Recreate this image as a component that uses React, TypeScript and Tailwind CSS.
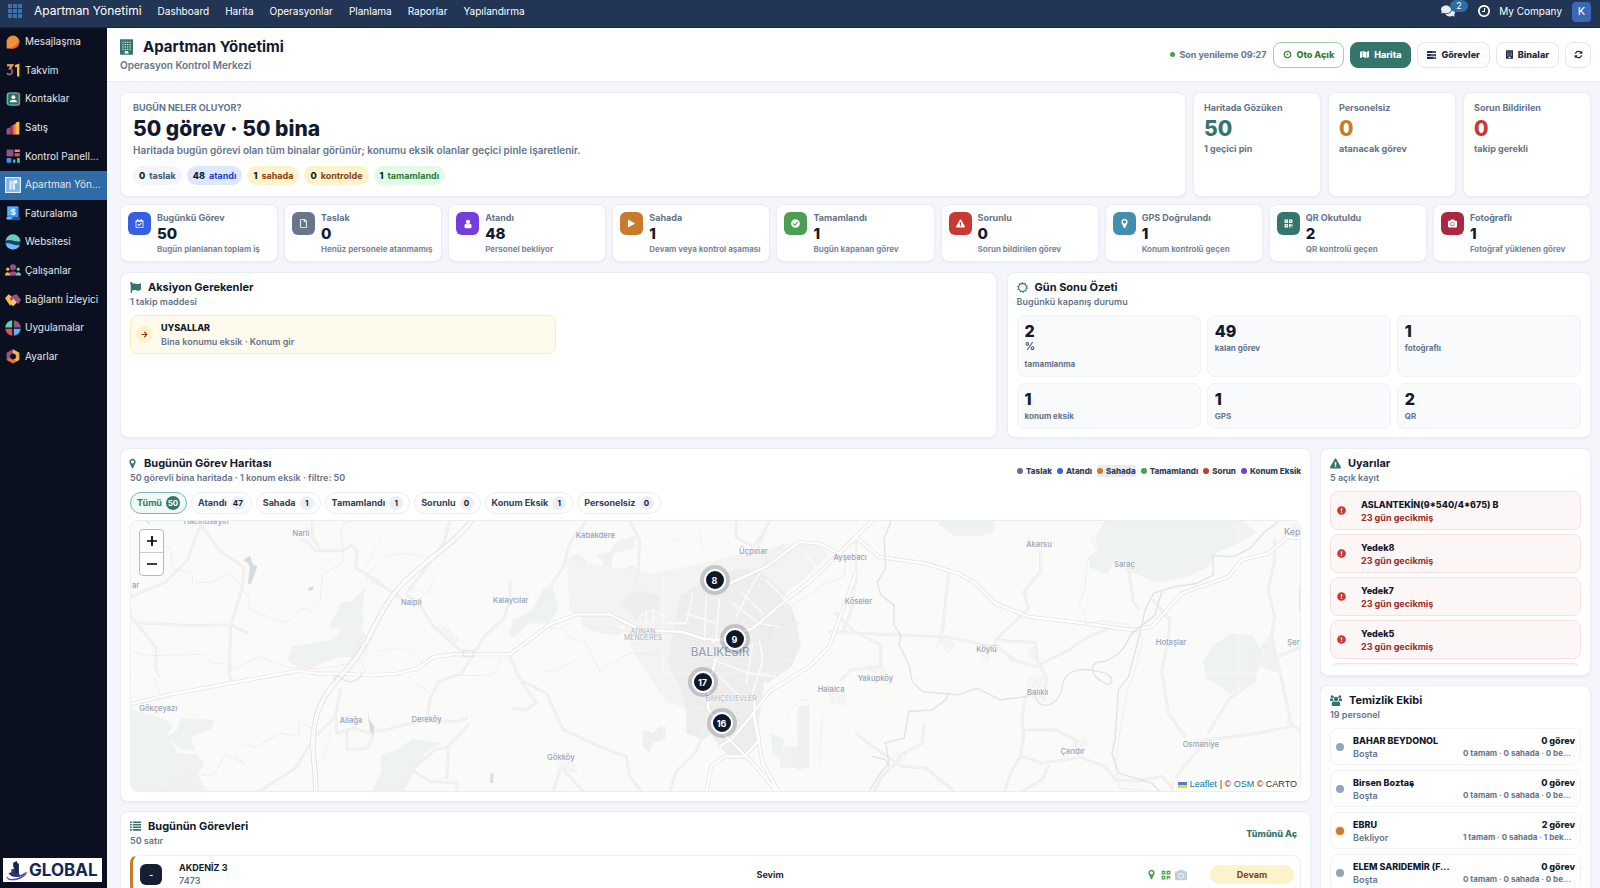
import React from "react";
import {
  FaArrowRight,
  FaCamera,
  FaCheckCircle,
  FaComments,
  FaExclamationCircle,
  FaExclamationTriangle,
  FaFlag,
  FaMap,
  FaQrcode,
  FaRegCalendarCheck,
  FaRegFile,
} from "react-icons/fa";

type IconProps = { className?: string };

function Glyph({ d, className }: { d: string; className?: string }) {
  return (
    <svg viewBox="0 0 1792 1792" fill="currentColor" className={className} aria-hidden="true">
      <path d={d} />
    </svg>
  );
}

const UserIcon = (p: IconProps) => (
  <Glyph
    {...p}
    d="M1536 1399q0 109-62.5 187t-150.5 78h-854q-88 0-150.5-78t-62.5-187q0-85 8.5-160.5t31.5-152 58.5-131 94-89 134.5-34.5q131 128 313 128t313-128q76 0 134.5 34.5t94 89 58.5 131 31.5 152 8.5 160.5zm-256-887q0 159-112.5 271.5t-271.5 112.5-271.5-112.5-112.5-271.5 112.5-271.5 271.5-112.5 271.5 112.5 112.5 271.5z"
  />
);
const RefreshIcon = (p: IconProps) => (
  <Glyph
    {...p}
    d="M1639 1056q0 5-1 7-64 268-268 434.5t-478 166.5q-146 0-282.5-55t-243.5-157l-129 129q-19 19-45 19t-45-19-19-45v-448q0-26 19-45t45-19h448q26 0 45 19t19 45-19 45l-137 137q71 66 161 102t187 36q134 0 250-65t186-179q11-17 53-117 8-23 30-23h192q13 0 22.5 9.5t9.5 22.5zm25-800v448q0 26-19 45t-45 19h-448q-26 0-45-19t-19-45 19-45l138-138q-148-137-349-137-134 0-250 65t-186 179q-11 17-53 117-8 23-30 23h-199q-13 0-22.5-9.5t-9.5-22.5v-7q65-268 270-434.5t480-166.5q146 0 284 55.5t245 156.5l130-129q19-19 45-19t45 19 19 45z"
  />
);
const PinIcon = (p: IconProps) => (
  <Glyph
    {...p}
    d="M1152 640q0-106-75-181t-181-75-181 75-75 181 75 181 181 75 181-75 75-181zm256 0q0 109-33 179l-364 774q-16 33-47.5 52t-67.5 19-67.5-19-46.5-52l-365-774q-33-70-33-179 0-212 150-362t362-150 362 150 150 362z"
  />
);
const PlayIcon = (p: IconProps) => (
  <Glyph {...p} d="M1576 927l-1328 738q-23 13-39.5 3t-16.5-36v-1472q0-26 16.5-36t39.5 3l1328 738q23 13 23 31t-23 31z" />
);
const ClockIcon = (p: IconProps) => (
  <Glyph
    {...p}
    d="M1024 544v448q0 14-9 23t-23 9h-320q-14 0-23-9t-9-23v-64q0-14 9-23t23-9h224v-352q0-14 9-23t23-9h64q14 0 23 9t9 23zm416 352q0-148-73-273t-198-198-273-73-273 73-198 198-73 273 73 273 198 198 273 73 273-73 198-198 73-273zm224 0q0 209-103 385.5t-279.5 279.5-385.5 103-385.5-103-279.5-279.5-103-385.5 103-385.5 279.5-279.5 385.5-103 385.5 103 279.5 279.5 103 385.5z"
  />
);

function BuildingIcon({ className }: IconProps) {
  const rows = [4, 8, 12, 16];
  const cols = [4, 8, 12, 16];
  return (
    <svg viewBox="0 0 22 26" className={className} aria-hidden="true">
      <rect width="22" height="26" rx="1" fill="currentColor" />
      {rows.map((y) =>
        cols.map((x) => <rect key={`${x}-${y}`} x={x} y={y} width="2" height="2" fill="#fff" opacity=".85" />),
      )}
      <rect x="8" y="20" width="6" height="4" fill="#fff" />
    </svg>
  );
}

function TeamIcon({ className }: IconProps) {
  return (
    <svg viewBox="0 0 24 22" className={className} fill="currentColor" aria-hidden="true">
      <circle cx="4.500" cy="3.500" r="3" />
      <circle cx="19.500" cy="3.500" r="3" />
      <path d="M0 12V9c0-1.500 1-2 2-2h4.500c-.8 1.500-.8 3.500 0 5zM24 12V9c0-1.500-1-2-2-2h-4.500c.8 1.500.8 3.500 0 5z" />
      <circle cx="12" cy="8" r="4.400" />
      <path d="M3.500 19c0-4 1-6.500 4.500-6.500 2.500 1.500 5.500 1.500 8 0 3.500 0 4.500 2.500 4.500 6.500 0 2-1 3-3 3h-11c-2 0-3-1-3-3z" />
    </svg>
  );
}

function TasksIcon({ className }: IconProps) {
  return (
    <svg viewBox="0 0 18 16" className={className} aria-hidden="true">
      <path fill="currentColor" d="M0 0h18v4.200H0zM0 5.800h18V10H0zM0 11.600h18v4.200H0z" />
      <path fill="#fff" d="M11 1.500h5.500v1.200H11zM7 7.300h9.500v1.200H7zM12.500 13.100h4v1.200h-4z" />
    </svg>
  );
}

function ListIcon({ className }: IconProps) {
  return (
    <svg viewBox="0 0 18 16" className={className} fill="currentColor" aria-hidden="true">
      <path d="M0 .5h3v2.500H0zM4.500.5H18v2.500H4.500zM0 4.700h3v2.500H0zM4.500 4.700H18v2.500H4.500zM0 8.900h3v2.500H0zM4.500 8.900H18v2.500H4.500zM0 13.100h3v2.500H0zM4.500 13.100H18v2.500H4.500z" />
    </svg>
  );
}

function SunIcon({ className }: IconProps) {
  return (
    <svg viewBox="0 0 24 24" className={className} aria-hidden="true">
      <circle cx="12" cy="12" r="8.500" fill="none" stroke="currentColor" strokeWidth="2.400" />
      <circle cx="12" cy="12" r="10.500" fill="none" stroke="currentColor" strokeWidth="2.600" strokeDasharray="2.500 4.097" />
    </svg>
  );
}

/* ---------- Sidebar ---------- */

const menuIcons: Record<string, React.ReactNode> = {
  chat: (
    <>
      <path d="M2 10a8 8 0 1 1 8 8H2z" fill="#f0903a" />
      <path d="M17.500 7.500A8 8 0 0 1 10 18H5C11 17 15 13 17.500 7.500z" fill="#e2613c" />
    </>
  ),
  calendar: (
    <>
      <path d="M2.500 4.200H9L6 8.500a3.600 3.600 0 1 1-3.600 5.300" fill="none" stroke="#985184" strokeWidth="2.500" />
      <path d="M2.500 4.200H9L6 8.500" fill="none" stroke="#f09a4d" strokeWidth="2.500" />
      <path d="M12.500 5.500L16.500 4v14" fill="none" stroke="#fbb945" strokeWidth="3" />
    </>
  ),
  contacts: (
    <>
      <rect x="5" y="2" width="14" height="16.500" rx="3" fill="#e06a6a" />
      <rect x="2" y="2" width="15" height="16" rx="3" fill="#4ec4a7" />
      <rect x="4" y="3" width="13" height="14" rx="2" fill="#2c6f62" />
      <circle cx="10.500" cy="7.700" r="2.400" fill="#fff" />
      <path d="M6 14c0-4 9-4 9 0z" fill="#fff" />
    </>
  ),
  sales: (
    <>
      <path d="M2 11l5-2v9H2z" fill="#985184" />
      <path d="M7 7.500l5-2V18H7z" fill="#a83a4d" />
      <path d="M10.500 6L14 4.500V18h-3.500z" fill="#ef7e4c" />
      <path d="M13.500 3L18 2v16h-4.500z" fill="#fbb945" />
    </>
  ),
  dashboard: (
    <>
      <rect x="2" y="2" width="8.500" height="8.500" fill="#985184" />
      <rect x="12" y="2" width="6.500" height="3" fill="#fc868b" />
      <rect x="12" y="6.500" width="6.500" height="4" fill="#e04e50" />
      <rect x="2" y="12.500" width="6" height="6" rx="1" fill="#3f8df6" />
      <path d="M10 14.500h3v4h-3zM15 12.500h3.500v6H15z" fill="#3bc6a8" />
    </>
  ),
  building: (
    <>
      <rect width="20" height="20" fill="#dfeefa" />
      <rect x="1.500" y="1.500" width="17" height="17" fill="#7fb5e2" />
      <path d="M5.500 4.500h7V16h-7z" fill="#e8f4fd" />
      <path d="M7 6.500h4M7 9h4M7 11.500h4" stroke="#8fc0e8" strokeWidth="1.200" />
      <path d="M8 13h2v3H8z" fill="#7fb5e2" />
      <circle cx="13.500" cy="6" r="2.200" fill="#fff" />
    </>
  ),
  invoice: (
    <>
      <path d="M3 2h14v16H3z" fill="#3b8eea" />
      <path d="M2 15l6 0v3H2z" fill="#6ec2ff" />
      <path d="M10 15h9v3a2 2 0 0 1-2 1h-7z" fill="#1d4fa8" />
      <path d="M3 2h14L3 14z" fill="#5ab0fa" />
      <text x="7" y="13" fontSize="10" fontWeight="700" fill="#fff">$</text>
    </>
  ),
  website: (
    <>
      <circle cx="10" cy="10" r="9.500" fill="#1d3f62" />
      <path d="M.6 8.500A9.500 9.500 0 0 1 19.400 8.500C14 12 8 5 .6 8.500z" fill="#5fd0b8" />
      <path d="M.7 12c6-2 12 4 18 1.500A9.500 9.500 0 0 1 .7 12z" fill="#6cbcf8" />
    </>
  ),
  employees: (
    <>
      <circle cx="10" cy="6.500" r="3.800" fill="#985184" />
      <path d="M5 17v-3c0-3 10-3 10 0v3z" fill="#985184" />
      <circle cx="3.500" cy="9" r="2" fill="#fbb945" />
      <circle cx="16.500" cy="9" r="2" fill="#5fd0b8" />
      <path d="M0 17c0-5 6-6 6 0zM6 17c0-1 2-1 2 0z" fill="#fbb945" />
      <path d="M14 17c0-6 6-5 6 0z" fill="#5fd0b8" />
    </>
  ),
  tracker: (
    <>
      <path d="M0 9l4.500-5 4 3-2 3 4 4-4 4.500z" fill="#fbb945" />
      <path d="M20 11l-5.500-7-5 1.500-3 4.500 3 1.500 2.500-2 4.500 7.500z" fill="#985184" />
      <path d="M8 12l3-2.500 4 4.500-5 5-3-3z" fill="#f7c56d" />
    </>
  ),
  apps: (
    <>
      <path d="M9 9.300H.3A9.700 9.700 0 0 1 9 .3z" fill="#5fd0b8" />
      <path d="M11 9.300h8.700A9.700 9.700 0 0 0 11 .3z" fill="#985184" />
      <path d="M9 11H.3A9.700 9.700 0 0 0 9 19.700z" fill="#e8504f" />
      <path d="M11 11h8.700A9.700 9.700 0 0 1 11 19.700z" fill="#5ab5f5" />
    </>
  ),
  settings: (
    <>
      <path d="M10 1.500l8 4.500-4 5h-1l-3-4z" fill="#fbb945" />
      <path d="M18 6v9l-4 2-4-2 4-4.500z" fill="#f7b445" />
      <path d="M10 1.500L2 6v9l4-4 4-4z" fill="#985184" />
      <path d="M2 15l8 4.500 5-3L10 14l-4-3z" fill="#ef6c3f" />
      <circle cx="10" cy="10.500" r="3.600" fill="#0b1020" />
    </>
  ),
};

const menu = [
  ["chat", "Mesajlaşma"],
  ["calendar", "Takvim"],
  ["contacts", "Kontaklar"],
  ["sales", "Satış"],
  ["dashboard", "Kontrol Panell..."],
  ["building", "Apartman Yön..."],
  ["invoice", "Faturalama"],
  ["website", "Websitesi"],
  ["employees", "Çalışanlar"],
  ["tracker", "Bağlantı İzleyici"],
  ["apps", "Uygulamalar"],
  ["settings", "Ayarlar"],
];

function Sidebar() {
  return (
    <aside className="flex w-[107px] shrink-0 flex-col justify-between bg-[#0b1020]">
      <nav className="grid h-[343px] auto-rows-fr">
        {menu.map(([icon, label]) => (
          <a
            key={icon}
            href={`#${icon}`}
            className={`flex items-center gap-1 pb-px pl-[5px] text-[10px] whitespace-nowrap text-[#e3e6ec] ${
              icon === "building" ? "bg-[#2f6ca5]" : ""
            }`}
          >
            <svg viewBox="0 0 20 20" className="size-4 shrink-0" aria-hidden="true">
              {menuIcons[icon]}
            </svg>
            {label}
          </a>
        ))}
      </nav>
      <div className="mr-[5px] mb-[6px] ml-[3px] flex h-6 items-center bg-white px-0.5">
        <svg viewBox="0 0 24 22" className="h-[21px] w-6 shrink-0" aria-hidden="true">
          <path d="M8 3l4-2v2l2 1v13H9V8L8 7z" fill="#14284f" />
          <path d="M6 10l3-1v8H6z" fill="#27407a" />
          <path d="M2 16c-3 6 14 5 21-4-1 8-20 13-22 6z" fill="#6e3bb0" />
          <path d="M3 14c4-2 9-1 13 2l6-4c-4 7-14 8-19 2z" fill="#1d3b74" />
        </svg>
        <span className="text-[17px] leading-none font-bold text-[#14284f]">GLOBAL</span>
      </div>
    </aside>
  );
}

/* ---------- Top bar ---------- */

function TopBar() {
  return (
    <header className="flex h-[28px] shrink-0 items-start justify-between border-b border-[#12244a] bg-[#233554] pr-[9px] pl-2 text-white">
      <div className="flex h-[22px] items-center">
        <button type="button" aria-label="Uygulamalar" className="mr-3 grid grid-cols-3 gap-px">
          {Array.from({ length: 9 }, (_, i) => (
            <span key={i} className="size-1 bg-[#3773ad]" />
          ))}
        </button>
        <a href="#home" className="mr-4 text-[12px]">
          Apartman Yönetimi
        </a>
        <nav className="flex gap-4 text-[10px]">
          {["Dashboard", "Harita", "Operasyonlar", "Planlama", "Raporlar", "Yapılandırma"].map((t) => (
            <a key={t} href={`#${t}`}>
              {t}
            </a>
          ))}
        </nav>
      </div>
      <div className="flex h-[22px] items-center text-[10px]">
        <button type="button" aria-label="Mesajlar" className="relative mr-[22px]">
          <FaComments className="size-[14px] text-[#e8ecf2]" />
          <span className="absolute -top-1 left-[9px] rounded-full bg-[#2f6ca5] px-[6px] text-[9px] leading-3">2</span>
        </button>
        <button type="button" aria-label="Aktiviteler" className="mr-2">
          <ClockIcon className="size-[14px]" />
        </button>
        <span className="mr-[10px]">My Company</span>
        <button type="button" className="mt-px h-5 w-[19px] rounded-sm bg-[#3d68b5] text-[11px]">
          K
        </button>
      </div>
    </header>
  );
}

function PageHeader() {
  const btn = "flex h-[26px] items-center gap-[5px] rounded-lg border px-[9px] text-[9px] font-extrabold";
  const plain = "border-[#e3e6f0] bg-white text-[#1f2a44]";
  return (
    <div className="flex h-[54px] shrink-0 items-center justify-between border-b border-[#e9ecf2] bg-white pr-[9px] pl-[13px]">
      <div>
        <h1 className="flex items-center gap-[10px] text-[15px] leading-5 font-bold text-[#111a2e]">
          <BuildingIcon className="h-4 w-[13px] text-[#35766c]" />
          Apartman Yönetimi
        </h1>
        <p className="mt-[2px] mb-[2px] text-[10px] leading-3 font-semibold text-[#64748b]">Operasyon Kontrol Merkezi</p>
      </div>
      <div className="flex items-center gap-[6px]">
        <span className="flex items-center gap-1 text-[9px] font-bold text-[#64748b]">
          <span className="size-[5px] rounded-full bg-[#43a04b]" />
          Son yenileme 09:27
        </span>
        <button type="button" className={`${btn} border-[#9fd3a5] bg-white text-[#2f8039]`}>
          <ClockIcon className="size-[9px]" />
          Oto Açık
        </button>
        <button type="button" className={`${btn} border-[#35766c] bg-[#35766c] text-white`}>
          <FaMap className="size-[9px]" />
          Harita
        </button>
        <button type="button" className={`${btn} ${plain}`}>
          <TasksIcon className="h-2 w-[9px]" />
          Görevler
        </button>
        <button type="button" className={`${btn} ${plain}`}>
          <BuildingIcon className="h-[9px] w-[7px]" />
          Binalar
        </button>
        <button
          type="button"
          aria-label="Yenile"
          className="flex size-[26px] items-center justify-center rounded-lg border border-[#e3e6f0] bg-white text-[#1f2a44]"
        >
          <RefreshIcon className="size-[9px]" />
        </button>
      </div>
    </div>
  );
}

/* ---------- Shared pieces ---------- */

const card = "rounded-lg border border-[#eaedf3] bg-white shadow-[0_1px_2px_rgba(15,23,42,0.05)]";

function Title({ icon, title, sub }: { icon: React.ReactNode; title: string; sub: string }) {
  return (
    <div>
      <h2 className="flex items-center text-[11px] leading-[14px] font-bold text-[#111a2e]">
        <span className="text-[#35766c]">{icon}</span>
        {title}
      </h2>
      <p className="mt-[2px] mb-px text-[9px] leading-3 font-semibold text-[#64748b]">{sub}</p>
    </div>
  );
}

/* ---------- Overview ---------- */

const pills = [
  ["0", "taslak", "bg-[#f2f4f9] text-[#475569]"],
  ["48", "atandı", "bg-[#dde8fc] text-[#2340cc]"],
  ["1", "sahada", "bg-[#fcf3cb] text-[#8a4015]"],
  ["0", "kontrolde", "bg-[#fcf3cb] text-[#8a4015]"],
  ["1", "tamamlandı", "bg-[#e1fbe8] text-[#2f7a3c]"],
];

const heroStats = [
  ["Haritada Gözüken", "50", "1 geçici pin", "text-[#35766c]"],
  ["Personelsiz", "0", "atanacak görev", "text-[#c97b2b]"],
  ["Sorun Bildirilen", "0", "takip gerekli", "text-[#c93831]"],
];

function Hero() {
  return (
    <section className="grid h-[105px] grid-cols-[1fr_128px_128px_128px] gap-[7px]">
      <div className={`${card} px-3 pt-[9px]`}>
        <p className="text-[9px] leading-3 font-bold text-[#64748b]">BUGÜN NELER OLUYOR?</p>
        <p className="mt-[3px] text-[21px] leading-6 font-extrabold text-[#111a2e]">50 görev · 50 bina</p>
        <p className="mt-[3px] text-[10px] leading-3 font-semibold text-[#64748b]">
          Haritada bugün görevi olan tüm binalar görünür; konumu eksik olanlar geçici pinle işaretlenir.
        </p>
        <div className="mt-[10px] flex gap-[5px]">
          {pills.map(([n, t, c]) => (
            <span key={t} className={`rounded-full px-[6px] text-[9px] leading-[19px] font-bold ${c}`}>
              <b className="mr-1 font-extrabold text-[#111a2e]">{n}</b>
              {t}
            </span>
          ))}
        </div>
      </div>
      {heroStats.map(([l, n, s, c]) => (
        <div key={l} className={`${card} px-[10px] pt-[9px] text-[9px] leading-3 font-bold text-[#64748b]`}>
          <p>{l}</p>
          <p className={`mt-[3px] text-[21px] leading-6 font-extrabold ${c}`}>{n}</p>
          <p className="mt-[2px]">{s}</p>
        </div>
      ))}
    </section>
  );
}

const stats: [string, string, string, string, React.ReactNode][] = [
  ["Bugünkü Görev", "50", "Bugün planlanan toplam iş", "bg-[#385fe3]", <FaRegCalendarCheck />],
  ["Taslak", "0", "Henüz personele atanmamış", "bg-[#697589]", <FaRegFile />],
  ["Atandı", "48", "Personel bekliyor", "bg-[#733de0]", <UserIcon className="size-[10px]" />],
  ["Sahada", "1", "Devam veya kontrol aşaması", "bg-[#c97b2b]", <PlayIcon className="size-[9px]" />],
  ["Tamamlandı", "1", "Bugün kapanan görev", "bg-[#4b9f52]", <FaCheckCircle />],
  ["Sorunlu", "0", "Sorun bildirilen görev", "bg-[#c93831]", <FaExclamationTriangle />],
  ["GPS Doğrulandı", "1", "Konum kontrolü geçen", "bg-[#418eaf]", <PinIcon className="size-[11px]" />],
  ["QR Okutuldu", "2", "QR kontrolü geçen", "bg-[#35766c]", <FaQrcode />],
  ["Fotoğraflı", "1", "Fotoğraf yüklenen görev", "bg-[#ab2940]", <FaCamera />],
];

function StatRow() {
  return (
    <section className="mt-[7px] grid grid-cols-9 gap-[6px]">
      {stats.map(([l, n, s, c, icon]) => (
        <div key={l} className={`${card} flex h-[58px] gap-[6px] px-[7px] pt-[7px]`}>
          <span className={`flex size-[23px] shrink-0 items-center justify-center rounded-md text-[9px] text-white ${c}`}>
            {icon}
          </span>
          <div className="min-w-0 whitespace-nowrap">
            <p className="text-[9px] leading-3 font-bold text-[#64748b]">{l}</p>
            <p className="mt-px text-[15px] leading-[18px] font-extrabold text-[#111a2e]">{n}</p>
            <p className="mt-px text-[8px] leading-[10px] font-bold text-[#7a879c]">{s}</p>
          </div>
        </div>
      ))}
    </section>
  );
}

const summary = [
  ["2", "tamamlanma", "%"],
  ["49", "kalan görev", ""],
  ["1", "fotoğraflı", ""],
  ["1", "konum eksik", ""],
  ["1", "GPS", ""],
  ["2", "QR", ""],
];

function ActionRow() {
  return (
    <section className="mt-[10px] grid grid-cols-[3fr_2fr] gap-[10px]">
      <div className={`${card} px-[9px] pt-[7px] pb-2`}>
        <Title icon={<FaFlag className="mr-[7px] size-[11px]" />} title="Aksiyon Gerekenler" sub="1 takip maddesi" />
        <div className="mt-[7px] grid grid-cols-2 gap-[5px]">
          <a
            href="#uysallar"
            className="flex h-[39px] items-center gap-2 rounded-lg border border-[#fbeeb4] bg-[#fffbec] px-[5px]"
          >
            <span className="flex size-[17px] items-center justify-center rounded-full bg-[#fcf3cb] text-[#8a4015]">
              <FaArrowRight className="size-[7px]" />
            </span>
            <span>
              <span className="block text-[9px] leading-3 font-extrabold text-[#111a2e]">UYSALLAR</span>
              <span className="mt-[2px] block text-[9px] leading-3 font-semibold text-[#64748b]">
                Bina konumu eksik · Konum gir
              </span>
            </span>
          </a>
        </div>
      </div>
      <div className={`${card} px-[9px] pt-[7px] pb-2`}>
        <Title icon={<SunIcon className="mr-[7px] size-[11px]" />} title="Gün Sonu Özeti" sub="Bugünkü kapanış durumu" />
        <div className="mt-[7px] grid grid-cols-3 gap-[6px]">
          {summary.map(([n, l, unit]) => (
            <div key={l} className="rounded-lg border border-[#eff2f8] bg-[#f8fafc] px-[7px] pt-[6px] pb-[7px]">
              <p className="text-[16px] leading-[18px] font-extrabold text-[#111a2e]">{n}</p>
              {unit && <p className="h-4 text-[11px] leading-3 text-[#1f2a44]">{unit}</p>}
              <p className="mt-[3px] text-[8px] leading-[10px] font-bold text-[#64748b]">{l}</p>
            </div>
          ))}
        </div>
      </div>
    </section>
  );
}

/* ---------- Map ---------- */

const mapLabels: [number, number, string, number?][] = [
  [256, 41, "Hacıhüseyin"],
  [541, 77, "Narlı"],
  [44, 233, "ar"],
  [873, 286, "Naipli"],
  [1172, 279, "Kalaycılar"],
  [112, 602, "Gökçeyazı"],
  [692, 641, "Aliağa"],
  [919, 636, "Dereköy"],
  [1427, 84, "Kabakdere"],
  [1902, 132, "Üçpınar"],
  [2193, 149, "Ayşebacı"],
  [2218, 282, "Köseler"],
  [1323, 751, "Gökköy"],
  [2136, 547, "Halalca"],
  [2269, 514, "Yakupköy"],
  [2761, 111, "Akarsu"],
  [3018, 169, "Saraç"],
  [3158, 405, "Hotaşlar"],
  [2603, 426, "Köylü"],
  [2757, 556, "Balıklı"],
  [2862, 733, "Çandır"],
  [3248, 713, "Osmaniye"],
  [3534, 406, "Şerif"],
  [3530, 73, "Keps", 27],
];

const forest = [
  "M735 230l-15 75 10 15-10 35 10 20-10 60-20 10-40-5-60 20-30 18-45-10-25-15 15-45 50-5 70-15 30-30-30-5-10-10 20-30 15-35 35-5z",
  "M30 600l95 25 30 20-15 30 30 55 60 5 20 30-20 30 30 55-20 20H30z",
  "M180 625l100 5-10 30-60 20 15 45-50-10-35-35 30-20z",
  "M750 850l35-65-5-50 50-15 45-32 90 12-50 30-35 55-30 65z",
  "M1165 380l15-50 60-30 30-65 30-5 15 70-30 40-60 0-40 40z",
  "M1380 325l50-5 50 20 40 25-30 10-50-5-50-20z",
  "M1325 155l50-25 25 20-10 35-30-5z",
  "M1430 135l40-10 20-30 60-20-10 40-60 15-10 70-25-5 5-40z",
  "M1500 180l40-15 20 25-30 20z",
  "M2035 590l35-5v190h-85l-5-30 20-35 35 0z",
  "M1955 670l40 20-10 50-25-5z",
  "M2460 32h168l-5 35-40 10-75 0-50-35z",
  "M2960 32h415l40 35-60 35-60 25-20 40-60 30-100 20-60-25-30-10-30-40-30 50-50-20-5-30 30-20-10-40z",
  "M3340 370l60 5 40 60-35 80-40 20-30 20-20-20-50-30-10-50 30-50z",
  "M3440 400l30-10 10 100-50-20z",
  "M2415 150l75 25-5 5-70-15z",
];

const minorRoads = [
  "M240 45l60 80 70 45-5 60-35 120-5 140 10 30",
  "M240 45l-25 60-15 45-65 65-105 45",
  "M50 338l150 8 130-2 50 25",
  "M30 318l75 95 0 60 8 25",
  "M540 85l25 15 20 22 80 0 30-18 15 20-5 50 30 15 40 30 75 50",
  "M575 30l0 50 25 42",
  "M860 255l40 30 40 65 85 75 30 12 40-60 55-50 20-60 0-50",
  "M1055 440l-30 50-70 25-25 50-10 55",
  "M1045 645l-60 65-40 10-70 60-30 60M870 780l60 35 80 5 0 25M985 715l-5 90",
  "M660 540l-15 80 5 50 50-15 60 20-20 40-60 5 0-55M740 665l60-5 50-15 60-10 100 0 30-10",
  "M645 620l-65 65-55 90-110 70",
  "M1170 440l30 70 50 70-35 20-35-5M1200 510l80 40 50 110 110 50 80 30 10 60 60 80",
  "M990 30l-20 70-110 150",
  "M1400 30l-50 70-20 70-60 90-40 60-50 40",
  "M1530 30l30 60-5 110-15 50",
  "M1850 30l0 50 50 30 30-40 20-40M1930 80l-20 45",
  "M1860 255l60-60 30-60 40-30",
  "M2210 80l0 130-10 80-30 80",
  "M2150 310l50 50 85 45 0 60",
  "M2130 365l210 10 140 5 150 30 60 40 60 20 100-50 60-40 60-25",
  "M2165 510l30-30 90-10",
  "M2490 190l-10 80-10 95M2765 125l0 60-50 60 15 50-100 95 120 8 5 50 30 60-10 60",
  "M2630 400l50 50 70 20",
  "M2720 560l-10 70 5 50-10 60-30 50-15 50",
  "M2720 660l90 0 60 30 10 50 80 30 30 40 60 5 80-15 30 30",
  "M2710 740l60 20 100-15M2790 770l-20 40-60 35",
  "M3030 175l15 100 15 20M3105 270l50 60-5 60-20 90 20 130 50 70",
  "M3470 90l0 60-20 90 20 80-10 60 20 80 20 90 20 100-100 20-110 15-50 5",
  "M3270 670l60-100 80-60 0-70 50-60M3510 635l40 30M3480 440l70-30",
  "M3240 720l-60 70-20 50",
  "M2210 670l50 40 90 60 70 5 80 65M2340 740l70-40 5-60M2345 745l-60 60-20 40",
  "M1650 845l20-60 60-60 30-80 10-60",
  "M1320 780l-20 65M1330 780l60 65",
];

const whiteRoads = [
  "M30 583l120-30 380-70 60 8 60 0 110 5 70-5 60-15 50-35 60-8 170 0 80-60 40-30 80-30 100 0 90 45 130 8 60 20 60 5",
  "M1780 395l120-40 70-60 100-80 100-95 90-90",
  "M2210 190l-80 220-60 60-120 75-60 80-50 60-40 25",
  "M1790 445l-20 70-5 80 50 80 90 90 70 85",
  "M1905 620l15 70-45 50-60 0-40 30-15 80M1905 560l0 70 25 130 50 90",
  "M1830 220l110-50 100-75 60 5 60 30",
  "M2210 80l70 60 140 20 100 30 50 30 60 60 100 40 170 20 140 20 60-10 90-100 140-50 40-50 80-20 60-50 60 5 40 15",
];

const motorway = "M1055 30c-70 90-160 130-225 210-60 70-70 130-120 200-40 60-100 90-125 190-20 80 5 150 0 220";

function MapDrawing() {
  return (
    <svg
      viewBox="0 0 1172 272"
      preserveAspectRatio="xMidYMid slice"
      className="absolute inset-0 h-full w-full"
      role="img"
      aria-label="Balıkesir haritası"
    >
      <defs>
        <pattern id="streets" width="26" height="22" patternUnits="userSpaceOnUse" patternTransform="rotate(12)">
          <rect width="26" height="22" fill="#f0f0ef" />
          <path d="M0 5h26M0 13h26M5 0v22M14 0v22M21 6v16" stroke="#e7e7e6" strokeWidth="1.500" />
        </pattern>
        <pattern id="blocks" width="16" height="16" patternUnits="userSpaceOnUse" patternTransform="rotate(25)">
          <path d="M0 4h16M0 11h16M5 0v16" stroke="#e8e8e7" strokeWidth="1.500" fill="none" />
        </pattern>
      </defs>
      <rect width="1172" height="272" fill="#fafaf8" />
      <g transform="translate(-10 -10) scale(.33333)" fill="none" strokeLinejoin="round" strokeLinecap="round">
        {forest.map((d) => (
          <path key={d} d={d} fill="#eef3ef" />
        ))}
        <path d="M1600 190l150-30 160-40 160-30 60 40-90 90-70 40-10 60 90 15-60 60-110 120-150 90-90-30-90-130-40-100-90 5-70-50-10-150z" fill="#f3f3f1" />
        <path d="M1500 275l60-35 60 15 0 60-70 15z" fill="url(#streets)" />
        <path d="M1680 260l60-40 110-45 70 5 80 70-40 80-20 100-10 130-15 90-20 80-60 20-50-60-20-60-60-20-20-70-40-80z" fill="url(#streets)" />
        <path d="M1950 300l60-20 20 50 15 80-30 60-70 50-50-10 30-140z" fill="url(#streets)" />
        <path d="M1700 560l70 0 20 100-40 30-50-20z" fill="url(#streets)" />
        <path d="M1850 620l70 20-15 80-50-10z" fill="url(#streets)" />
        <path d="M1570 660l30 10 20-20 20 0-5 40-35 10-10 30-20-20z" fill="#efefee" />
        <path d="M735 190l40 15 20 30-60-20zM945 350l30-5 45 45-15 15zM2120 540l60 20-5 30-40-10zM2460 370l40 10 10 40-30 10-20-30zM2585 430l30 5-5 25-20-5zM2730 500l50 0 0 70-60-10zM2870 690l40-5 0 20-40 10zM1310 750l50 5 15 35-50-10zM3230 680l30 5-5 30-20-5zM3520 40l25 0 0 50-30-10zM2725 410l25 0 0 45-20-5zM2330 725l30 5 0 25-30 0zM2240 465l60 5 0 30-50 10z" fill="url(#blocks)" />
        <path d="M2045 590l25 5-10 180-25 5z" fill="#eeefee" />
        <g stroke="#f1f1f0" strokeWidth="3">
          <path d="M730 180l50-95M740 190l60-55 60-5 70 10M860 230l60 20 25-50M730 260l-10 70 20 70M760 425l80-12 40 10 30 40M610 750l20-90M120 560l-20-60M1240 490l70-10 60-30M1650 80l40 20 40 30M1740 60l10 60M1960 50l-60 60M2000 620l40-50 30 0M2110 610l-10 160M2480 340l-30 80M2350 80l50 60" />
        </g>
        <g stroke="#ebebea" strokeWidth="8">
          {minorRoads.map((d) => (
            <path key={d} d={d} />
          ))}
        </g>
        <g stroke="#f3f3f2" strokeWidth="4">
          {minorRoads.map((d) => (
            <path key={d} d={d} />
          ))}
        </g>
        <g stroke="#e6e6e5" strokeWidth="12">
          {whiteRoads.map((d) => (
            <path key={d} d={d} />
          ))}
        </g>
        <g stroke="#ffffff" strokeWidth="7">
          {whiteRoads.map((d) => (
            <path key={d} d={d} />
          ))}
        </g>
        <path d={motorway} stroke="#dededd" strokeWidth="16" />
        <path d={motorway} stroke="#ffffff" strokeWidth="11" />
        <path d={motorway} stroke="#eeeeed" strokeWidth="2" />
        <path d="M640 510c0-20 20-10 30 0 20 12 50 0 55-22M1030 422h30v18h-30z" stroke="#e3e3e2" strokeWidth="4" />
        <path d="M1760 260l-5 130M1800 265l-10 120M1840 280l80 60 60 10M1870 250l60 60M1940 210l60 60-70 60M1850 320l40-80 30-50M1700 310l90 30M1640 340l60 0 20-90M1780 450l110 40 80 10M1900 400l-20 120M1920 390l10 60-30 100M1800 500l60 60M2060 130l30 40M1560 320l40-20 40 20M1580 300l0 40M1600 300l0 35" stroke="#fafafa" strokeWidth="5" />
        <g stroke="#f1dfdd" strokeWidth="3" strokeDasharray="5 5" strokeLinecap="butt">
          <path d="M130 110l20 5 5 60 60 15 0 28 55-2 60-25 35 45 20 25 0 32 40 20 70 25 50-45 25 10 30-30 5-80 60-35 5-30-10-60 10-30 30-5" />
          <path d="M35 425l50 12 160-4 30 25 50 5 5 18 85-40 80 30 80 5 60-5 50-10 30-60 15-30 10 60-20 20 15 35-15 15" />
          <path d="M140 845l30-35 40-15 70 0 35-65 55 35-30-35 30-30 30 15 80-45 55 10 0-45 45 25" />
          <path d="M865 500l35 30 30 15M985 522l25-25 110-2 25-50" />
          <path d="M1270 355l60 0 15 28 50 10 45 90 90-55 90 5 25-15" />
          <path d="M1950 385l5-35 70-12-10-50 100-65 60-25 5-60" />
          <path d="M2970 32l-50 50 15 40-30 30-5 80-20 60 20 20 0 30 50-10 75 10 20 20 30 20-20 80-30 90-20 110-15 120 15 55 80 5" />
        </g>
        <g stroke="#dde3ea" strokeWidth="4">
          <path d="M2315 35l-20 50 5 90-25 40 10 40 40 30 0 60 20 30-5 30 30 60 10 50 30 30 110 10 55-20 70 35 75-10 30-10c0 50 60 50 80-10 0-60 60-70 110-55 60 10 40 50 20 35-60-30-40-70-5-65 60-20 70-60 85-85l70-55 20-70" />
          <path d="M3480 35l-40 30-45 50-50 25-60-5 0 60-50 25-70 10-60 20-25 50-20 90-30 110-30 40-10 150-10 40 20 60 100 30 30 30" />
          <path d="M2490 550l-10 20-40 30-70 5-15 80-60 15M2300 700l10 60-30 35-30 50M2260 740l40 10 10 20M3545 240v60M30 35l40-10 15 15" />
        </g>
        <path d="M368 150l20-14 8 25 14 8-20 55-8-5 5-45-5-15zM563 232l18-2-5 10-10 3zM742 600l5 30 15 20-3 25-10-10-5-40zM1112 790l10 5-5 15 5 8-12 3z" fill="#d5dce0" />
        <path d="M1050 30v820M1630 30v820M2206 30v820M3360 30v820M30 490h3520" stroke="#ffffff" strokeWidth="2" opacity=".7" />
        <g
          fill="#97a3b7"
          stroke="#fafaf8"
          strokeWidth="3"
          paintOrder="stroke"
          fontSize="23"
          fontWeight="500"
          textAnchor="middle"
          fontFamily="Inter, sans-serif"
        >
          {mapLabels.map(([x, y, t, size]) => (
            <text key={t} x={x} y={y} fontSize={size ?? 23}>
              {t}
            </text>
          ))}
          <g fontWeight="400" fontSize="21" fill="#a9b2c3">
            <text x="1570" y="371">ADNAN</text>
            <text x="1570" y="391">MENDERES</text>
            <text x="1835" y="572">BAHÇELIEVLER</text>
          </g>
          <text x="1802" y="438" fontSize="35">
            BALIKESİR
          </text>
        </g>
      </g>
    </svg>
  );
}

const clusters = [
  ["8", "left-[calc(50%-1px)] top-[59px]"],
  ["9", "left-[calc(50%+19px)] top-[118px]"],
  ["17", "left-[calc(50%-13px)] top-[161px]"],
  ["16", "left-[calc(50%+6px)] top-[202px]"],
];

const filters = [
  ["Tümü", "50"],
  ["Atandı", "47"],
  ["Sahada", "1"],
  ["Tamamlandı", "1"],
  ["Sorunlu", "0"],
  ["Konum Eksik", "1"],
  ["Personelsiz", "0"],
];

const legend = [
  ["Taslak", "bg-[#667085]"],
  ["Atandı", "bg-[#385fe3]"],
  ["Sahada", "bg-[#c97b2b]"],
  ["Tamamlandı", "bg-[#4b9f52]"],
  ["Sorun", "bg-[#c93831]"],
  ["Konum Eksik", "bg-[#733de0]"],
];

function MapCard() {
  return (
    <section className={`${card} px-[9px] pt-[7px] pb-[9px]`}>
      <div className="flex items-center justify-between">
        <Title
          icon={<PinIcon className="mr-[6px] -ml-[3px] size-[11px]" />}
          title="Bugünün Görev Haritası"
          sub="50 görevli bina haritada · 1 konum eksik · filtre: 50"
        />
        <ul className="flex gap-[5px] text-[8px] leading-3 font-extrabold text-[#334155]">
          {legend.map(([t, c]) => (
            <li key={t} className={`flex items-center gap-[3px] ${t === "Sahada" ? "rounded-xs bg-[#e9ebf0]" : ""}`}>
              <span className={`size-[6px] rounded-full ${c}`} />
              {t}
            </li>
          ))}
        </ul>
      </div>
      <div className="mt-[7px] flex gap-1">
        {filters.map(([t, n], i) => (
          <button
            key={t}
            type="button"
            className={`flex h-[22px] items-center gap-1 rounded-full border px-[6px] text-[9px] font-bold ${
              i === 0 ? "border-[#7fb5a8] bg-[#eefbf5] text-[#35766c]" : "border-[#eaedf5] bg-white text-[#334155]"
            }`}
          >
            {t}
            <span
              className={`min-w-[14px] rounded-full text-center text-[8px] leading-[14px] ${
                i === 0 ? "bg-[#35766c] text-white" : "bg-[#e9eef8] text-[#111a2e]"
              }`}
            >
              {n}
            </span>
          </button>
        ))}
      </div>
      <div className="relative mt-[6px] h-[272px] overflow-hidden rounded-lg border border-[#e9edf4]">
        <MapDrawing />
        {clusters.map(([n, pos]) => (
          <button
            key={n}
            type="button"
            className={`absolute flex size-[30px] -translate-x-1/2 -translate-y-1/2 items-center justify-center rounded-full bg-[#0f172a]/20 ${pos}`}
          >
            <span className="size-[22px] rounded-full border-2 border-white bg-[#0f172a] text-center text-[9px] leading-5 font-bold text-white">
              {n}
            </span>
          </button>
        ))}
        <div className="absolute top-2 left-2 flex w-[25px] flex-col rounded-sm border border-[#b9b9b9] bg-white">
          <button type="button" aria-label="Yakınlaştır" className="flex h-[23px] items-center justify-center border-b border-[#cccccc]">
            <svg viewBox="0 0 10 10" className="size-[10px]" stroke="#000" strokeWidth="1.700">
              <path d="M0 5h10M5 0v10" />
            </svg>
          </button>
          <button type="button" aria-label="Uzaklaştır" className="flex h-[22px] items-center justify-center">
            <svg viewBox="0 0 10 10" className="size-[10px]" stroke="#000" strokeWidth="1.700">
              <path d="M0 5h10" />
            </svg>
          </button>
        </div>
        <p className="absolute right-0 bottom-0 flex items-center gap-[3px] bg-white/80 pr-[3px] pl-1 font-['Liberation_Sans',sans-serif] text-[9px] leading-[13px] text-[#333]">
          <svg viewBox="0 0 12 8" className="h-[6px] w-[9px]" aria-hidden="true">
            <path fill="#4c7be1" d="M0 0h12v4H0z" />
            <path fill="#ffd500" d="M0 4h12v4H0z" />
          </svg>
          <a href="#leaflet" className="text-[#0078a8]">
            Leaflet
          </a>
          <span>
            | © <a href="#osm" className="text-[#0078a8]">OSM</a> © CARTO
          </span>
        </p>
      </div>
    </section>
  );
}

function TaskCard() {
  return (
    <section className={`${card} mt-[9px] px-[9px] pt-[7px] pb-[9px]`}>
      <div className="flex items-center justify-between">
        <Title icon={<ListIcon className="mr-[7px] h-[10px] w-[11px]" />} title="Bugünün Görevleri" sub="50 satır" />
        <a href="#all" className="pr-1 text-[9px] font-extrabold text-[#35766c]">
          Tümünü Aç
        </a>
      </div>
      <div className="mt-[7px] grid h-[39px] grid-cols-[22px_1fr_1fr_84px] items-center gap-[17px] rounded-lg border border-l-3 border-[#eef1f6] border-l-[#c97b2b] pr-[6px] pl-[7px]">
        <span className="rounded-md bg-[#161e33] text-center text-[9px] leading-[21px] font-bold text-white">-</span>
        <span className="text-[9px] leading-3 font-bold text-[#111a2e]">
          AKDENİZ 3<span className="mt-px block font-semibold text-[#64748b]">7473</span>
        </span>
        <span className="flex items-center justify-between pl-[62px] text-[9px] font-bold text-[#1f2a44]">
          Sevim
          <span className="flex items-center gap-1 pr-[6px] text-[#4b9f52]">
            <PinIcon className="size-[11px]" />
            <FaQrcode className="size-[10px]" />
            <FaCamera className="size-[12px] text-[#c3cedd]" />
          </span>
        </span>
        <button type="button" className="rounded-full bg-[#fcf3cb] text-[9px] leading-[19px] font-bold text-[#8a4015]">
          Devam
        </button>
      </div>
    </section>
  );
}

/* ---------- Right column ---------- */

const alerts = ["ASLANTEKİN(9*540/4*675) B", "Yedek8", "Yedek7", "Yedek5"];

const crew = [
  ["BAHAR BEYDONOL", "Boşta", "0 görev", "0 tamam · 0 sahada · 0 be..."],
  ["Birsen Boztaş", "Boşta", "0 görev", "0 tamam · 0 sahada · 0 be..."],
  ["EBRU", "Bekliyor", "2 görev", "1 tamam · 0 sahada · 1 bek..."],
  ["ELEM SARIDEMİR (F...", "Boşta", "0 görev", "0 tamam · 0 sahada · 0 be..."],
];

function RightColumn() {
  return (
    <div className="flex min-w-0 flex-col gap-[9px]">
      <section className={`${card} px-[9px] pt-[7px] pb-[9px]`}>
        <Title icon={<FaExclamationTriangle className="mr-[7px] size-[11px]" />} title="Uyarılar" sub="5 açık kayıt" />
        <ul className="mt-[7px] flex h-[175px] flex-col gap-1 overflow-hidden">
          {alerts.map((t) => (
            <li
              key={t}
              className="flex h-[39px] shrink-0 items-center gap-[15px] rounded-lg border border-[#fbe0e0] bg-[#fdf6f6] px-[6px]"
            >
              <FaExclamationCircle className="size-[9px] text-[#c93831]" />
              <span className="text-[9px] leading-[13px] font-extrabold text-[#111a2e]">
                {t}
                <span className="block font-bold text-[#992b27]">23 gün gecikmiş</span>
              </span>
            </li>
          ))}
          <li className="h-[39px] shrink-0 rounded-lg border border-[#fbe0e0] bg-[#fdf6f6]" />
        </ul>
      </section>
      <section className={`${card} px-[9px] pt-[7px] pb-[9px]`}>
        <Title icon={<TeamIcon className="mr-[7px] h-[11px] w-3" />} title="Temizlik Ekibi" sub="19 personel" />
        <ul className="mt-[7px] flex flex-col gap-[5px]">
          {crew.map(([name, state, count, detail]) => (
            <li
              key={name}
              className="grid h-[37px] grid-cols-[8px_1fr_112px] items-center rounded-lg border border-[#f1f3f8] px-[5px] text-[9px] leading-[13px] font-semibold text-[#64748b]"
            >
              <span
                className={`size-2 rounded-full ${
                  state === "Bekliyor" ? "bg-[#c97b2b] ring-2 ring-[#f9ece0]" : "bg-[#94a3b8]"
                }`}
              />
              <span className="pl-[9px] whitespace-nowrap">
                <span className="block font-extrabold text-[#111a2e]">{name}</span>
                {state}
              </span>
              <span className="text-right whitespace-nowrap">
                <span className="block font-extrabold text-[#111a2e]">{count}</span>
                <span className="block text-left text-[8px] font-bold">{detail}</span>
              </span>
            </li>
          ))}
        </ul>
      </section>
    </div>
  );
}

export default function App() {
  return (
    <div className="flex h-screen flex-col overflow-hidden bg-[#f5f6fb] font-['Inter',sans-serif]">
      <TopBar />
      <div className="flex min-h-0 flex-1">
        <Sidebar />
        <div className="flex min-w-0 flex-1 flex-col">
          <PageHeader />
          <main className="min-h-0 flex-1 overflow-y-auto pt-[10px] pr-[9px] pl-[13px] [scrollbar-width:none]">
            <Hero />
            <StatRow />
            <ActionRow />
            <div className="mt-[10px] grid grid-cols-[1fr_271px] gap-[9px]">
              <div className="min-w-0">
                <MapCard />
                <TaskCard />
              </div>
              <RightColumn />
            </div>
          </main>
        </div>
      </div>
    </div>
  );
}
